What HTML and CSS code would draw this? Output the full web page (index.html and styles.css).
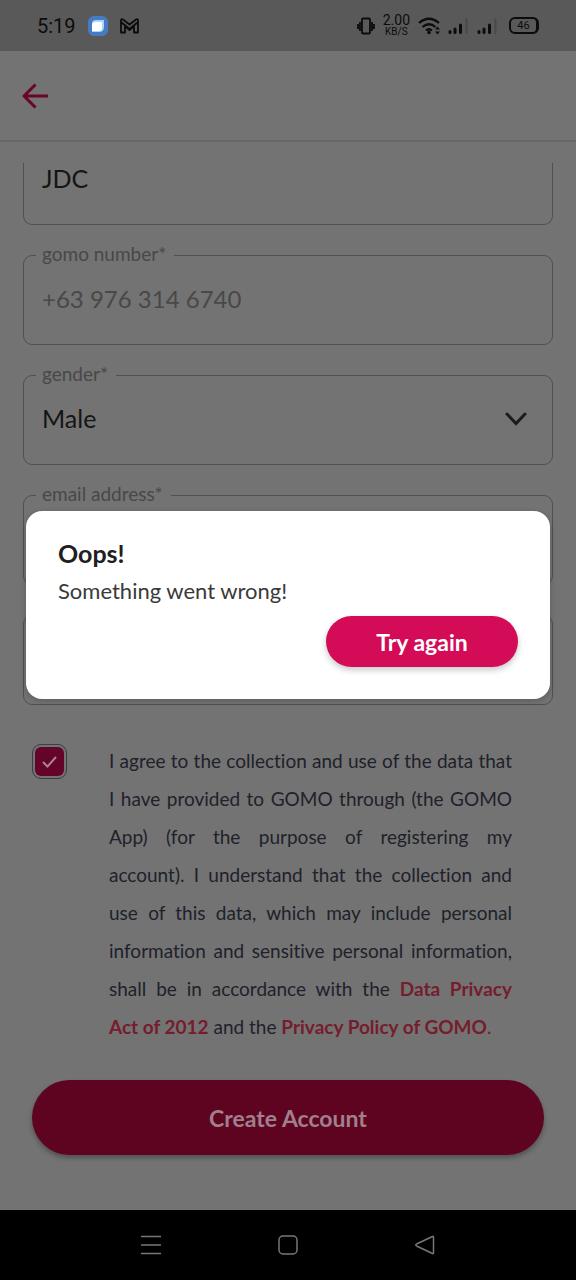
FILE: index.html
```html
<!DOCTYPE html>
<html lang="en">
<head>
<meta charset="utf-8">
<meta name="viewport" content="width=device-width, initial-scale=1">
<title>Create Account</title>
<link rel="stylesheet" href="styles.css">
</head>
<body>
<div class="app">
  <div class="status">
    <div class="status-group">
      <time class="clock">5:19</time>
      <svg class="app-icon" width="20" height="20" viewBox="0 0 20 20" aria-hidden="true"><rect width="20" height="20" rx="6" fill="#467bc4"/><path d="M4 8q0-4 4-4h8v7q0 5-5 5H4z" fill="#a9d4fb"/><path d="M4 9q0-3 3-3h7v6q0 3-3 3H4z" fill="#fff"/></svg>
      <svg width="19" height="16" viewBox="0 0 19 16" fill="none" stroke="#0c0c0c" stroke-width="1.800" stroke-linejoin="round" aria-hidden="true"><path d="M1 14.500V2.500Q1 .500 3 1.500l6.500 5L16 1.500q2-1 2 1v12h-4V8l-4.500 4L5 8v6.500zM1 4l8.500 7L18 4"/></svg>
    </div>
    <div class="status-group status-group--right">
      <svg width="18" height="18" viewBox="0 0 18 18" fill="none" stroke="#0c0c0c" stroke-width="1.800" aria-hidden="true"><rect x="5" y="1.500" width="8" height="15" rx="1"/><path d="M3 5v9M15 5v9M1 7v5M17 7v5"/></svg>
      <div class="rate"><span>2.00</span><span class="rate-unit">KB/S</span></div>
      <svg width="22" height="18" viewBox="0 0 22 18" fill="none" stroke="#0c0c0c" stroke-width="2.200" aria-hidden="true"><path d="M1 6Q11-2.500 21 6M4.500 10q6.500-5.500 13 0M8 13.500q3-2.500 6 0"/><circle cx="11" cy="15.500" r="1.800" fill="#0c0c0c" stroke="none"/><path d="M17 12.500l2.500-3 2.500 3zM17 14.500l2.500 3 2.500-3z" fill="#0c0c0c" stroke="none"/></svg>
      <svg width="21" height="18" viewBox="0 0 21 18" stroke-width="3" stroke-linecap="round" aria-hidden="true"><path d="M2 14.500v1M7 12v3.500M12.500 8v7.500" stroke="#0c0c0c"/><path d="M18.500 2v14" stroke="#4a4a4a" stroke-width="2"/></svg>
      <svg width="21" height="18" viewBox="0 0 21 18" stroke-width="3" stroke-linecap="round" aria-hidden="true"><path d="M2 14.500v1M7 12v3.500M12.500 8v7.500" stroke="#0c0c0c"/><path d="M18.500 2v14" stroke="#4a4a4a" stroke-width="2"/></svg>
      <div class="battery">46</div>
    </div>
  </div>

  <header class="topbar">
    <button class="back" type="button" aria-label="Back">
      <svg width="27" height="26" viewBox="0 0 27 26" fill="none" stroke="#6a0528" stroke-width="3" stroke-linejoin="round" aria-hidden="true"><path d="M13.500 1.500L2 13l11.500 11.500M2 13h24"/></svg>
    </button>
  </header>

  <form class="form">
    <div class="fields">
      <div class="field field--cut"><input class="control control--dark" type="text" value="JDC" aria-label="name"></div>
      <fieldset class="field">
        <legend class="legend"><label for="number">gomo number*</label></legend>
        <input class="control" id="number" type="tel" value="+63 976 314 6740" readonly>
      </fieldset>
      <fieldset class="field">
        <legend class="legend"><label for="gender">gender*</label></legend>
        <div class="select-wrap">
          <select class="control control--dark" id="gender"><option>Male</option><option>Female</option></select>
          <svg class="chevron" width="22" height="14" viewBox="0 0 22 14" fill="none" stroke="#1c1c1c" stroke-width="3" stroke-linecap="round" aria-hidden="true"><path d="M2 2l9 9.500L20 2"/></svg>
        </div>
      </fieldset>
      <fieldset class="field">
        <legend class="legend"><label for="email">email address*</label></legend>
        <input class="control" id="email" type="email">
      </fieldset>
      <div class="field field--plain"><input class="control" type="text" aria-label="details"></div>
    </div>

    <div class="consent">
      <input class="check" id="agree" type="checkbox" checked>
      <label class="consent-text" for="agree">I agree to the collection and use of the data that I have provided to GOMO through (the GOMO App) (for the purpose of registering my account).&nbsp;I understand that the collection and use of this data, which may include personal information and sensitive personal information, shall be in accordance with the <a class="link" href="#act">Data Privacy Act&nbsp;of&nbsp;2012</a> and the <a class="link" href="#policy">Privacy Policy of GOMO</a><span class="stop">.</span></label>
    </div>
    <button class="create" type="button">Create Account</button>
  </form>

  <div class="overlay">
    <section class="dialog" role="alertdialog" aria-labelledby="dialog-title" aria-describedby="dialog-text">
      <h1 class="dialog-title" id="dialog-title">Oops!</h1>
      <p class="dialog-text" id="dialog-text">Something went wrong!</p>
      <button class="retry" type="button">Try again</button>
    </section>
  </div>
</div>

<nav class="nav">
  <button class="nav-button" type="button" aria-label="Recent apps"><svg width="20" height="20" viewBox="0 0 20 20" fill="none" stroke="#777" stroke-width="1.500" aria-hidden="true"><path d="M0 1.500h20M0 10h20M0 18.500h20"/></svg></button>
  <button class="nav-button" type="button" aria-label="Home"><svg width="20" height="20" viewBox="0 0 20 20" fill="none" stroke="#777" stroke-width="1.500" aria-hidden="true"><rect x="1" y="1" width="18" height="18" rx="4"/></svg></button>
  <button class="nav-button" type="button" aria-label="Back"><svg width="20" height="20" viewBox="0 0 20 20" fill="none" stroke="#777" stroke-width="1.500" stroke-linejoin="round" aria-hidden="true"><path d="M17.500 1.500q1-.500 1 1v15q0 1.500-1 1L1.500 11q-1.500-1 0-2z"/></svg></button>
</nav>
</body>
</html>
```

FILE: styles.css
```css
* {
  box-sizing: border-box;
}

body {
  margin: 0;
  min-height: 100vh;
  display: flex;
  flex-direction: column;
  background: #737373;
  font-family: Lato, "Open Sans", sans-serif;
  font-variant-ligatures: none;
}

button {
  border: 0;
  padding: 0;
  background: none;
  font-family: inherit;
  cursor: pointer;
}

svg {
  display: block;
  flex: none;
}

.app {
  position: relative;
  flex: 1;
}

.status {
  height: 51px;
  padding: 0 37px;
  display: flex;
  align-items: center;
  justify-content: space-between;
  background: #595959;
  color: #0c0c0c;
}

.status-group {
  display: flex;
  align-items: center;
  gap: 12px;
}

.status-group--right {
  gap: 8px;
}

.clock {
  font-family: Roboto, sans-serif;
  font-size: 20px;
}

.rate {
  display: flex;
  flex-direction: column;
  align-items: center;
  font: 14px/12px Roboto, sans-serif;
}

.rate-unit {
  font-size: 10px;
  line-height: 12px;
}

.battery {
  width: 30px;
  height: 17px;
  margin-left: 3px;
  border: 2px solid #0c0c0c;
  border-right-width: 3px;
  border-radius: 6px;
  font: 11px/13px Roboto, sans-serif;
  text-align: center;
}

.topbar {
  height: 91px;
  padding: 0 22px;
  display: flex;
  align-items: center;
  border-bottom: 2px solid #666;
}

.form {
  padding: 21px 23px 54px;
}

.fields {
  display: flex;
  flex-direction: column;
  gap: 18px;
}

.field {
  min-width: 0;
  height: 102px;
  margin: 0;
  padding: 0 12px;
  border: 1px solid #515151;
  border-radius: 9px;
}

.field--cut {
  height: 62px;
  border-top: 0;
  border-radius: 0 0 9px 9px;
}

.field--cut .control {
  height: 32px;
}

.field--plain {
  height: 90px;
  margin-top: 12px;
}

.legend {
  height: 24px;
  padding: 0 8px 0 6px;
  color: #484848;
  font-size: 19px;
  line-height: 22px;
}

.control {
  display: block;
  width: 100%;
  height: 64px;
  padding: 0 6px 2px;
  border: 0;
  outline: 0;
  appearance: none;
  background: transparent;
  color: #484848;
  font-family: inherit;
  font-size: 24px;
}

.control--dark {
  color: #151515;
  font-size: 25px;
}

.select-wrap {
  display: grid;
  align-items: center;
}

.select-wrap > * {
  grid-area: 1 / 1;
}

.chevron {
  justify-self: end;
  margin-right: 13px;
  pointer-events: none;
}

.consent {
  margin-top: 37px;
  padding: 0 41px 0 9px;
  display: flex;
  align-items: flex-start;
  gap: 42px;
}

.check {
  flex: none;
  width: 35px;
  height: 35px;
  margin: 2px 0 0;
  appearance: none;
  border: 1px solid #3e3e3e;
  border-radius: 9px;
  background: url("data:image/svg+xml,%3Csvg xmlns='http://www.w3.org/2000/svg' viewBox='0 0 33 33'%3E%3Crect x='2' y='2' width='29' height='29' rx='6' fill='%2365042b'/%3E%3Cpath d='M10 17l4.500 4.500L23 12' fill='none' stroke='%23a9848f' stroke-width='2'/%3E%3C/svg%3E") center / 100% no-repeat;
}

.consent-text {
  flex: 1;
  color: #20212a;
  font-size: 19px;
  line-height: 38px;
  text-align: justify;
}

.link,
.stop {
  color: #751d2d;
  text-decoration: none;
}

.link {
  font-weight: 700;
}

.create {
  display: block;
  width: calc(100% - 18px);
  height: 75px;
  margin: 34px 9px 0;
  border-radius: 38px;
  background: #5e0421;
  box-shadow: 0 3px 5px rgb(0 0 0 / 30%);
  color: #a0808c;
  font-size: 23px;
  font-weight: 700;
}

.overlay {
  position: absolute;
  inset: 0;
  padding: 0 26px;
  display: flex;
  align-items: center;
}

.dialog {
  flex: 1;
  padding: 27px 32px 32px;
  display: flex;
  flex-direction: column;
  border-radius: 16px;
  background: #fff;
  box-shadow: 0 2px 6px rgb(0 0 0 / 20%);
}

.dialog-title {
  margin: 0;
  color: #202020;
  font-size: 25px;
  font-weight: 700;
  line-height: 30px;
}

.dialog-text {
  margin: 8px 0 10px;
  color: #3a3a3a;
  font-size: 22px;
  line-height: 30px;
}

.retry {
  align-self: flex-end;
  width: 192px;
  height: 51px;
  border-radius: 26px;
  background: #d40b57;
  box-shadow: 0 3px 6px rgb(0 0 0 / 22%);
  color: #fff;
  font-size: 23px;
  font-weight: 700;
}

.nav {
  height: 70px;
  padding: 0 82px;
  display: flex;
  align-items: center;
  background: #000;
}

.nav-button {
  flex: 1;
  height: 48px;
  display: grid;
  place-items: center;
}
```
